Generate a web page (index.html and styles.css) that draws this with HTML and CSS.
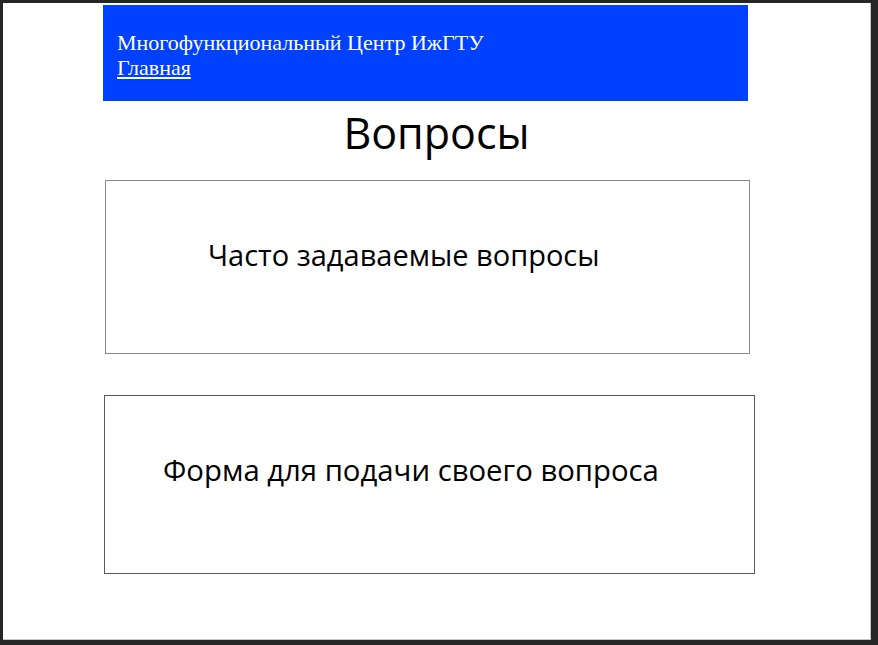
FILE: index.html
```html
<!DOCTYPE html>
<html lang="ru">
<head>
<meta charset="utf-8">
<title>Вопросы</title>
<link rel="stylesheet" href="styles.css">
</head>
<body>
<div class="canvas">
  <header class="header">
    <div class="brand">Многофункциональный Центр ИжГТУ</div>
    <a class="home" href="#">Главная</a>
  </header>
  <h1 class="title">Вопросы</h1>
  <div class="box box-faq">Часто задаваемые вопросы</div>
  <div class="box box-form">Форма для подачи своего вопроса</div>
</div>
</body>
</html>
```
FILE: styles.css
```css
html, body {
  margin: 0;
  padding: 0;
  background: #262626;
}
body {
  width: 878px;
  height: 645px;
  overflow: hidden;
}
.canvas {
  margin: 3px 0 0 3px;
  width: 867px;
  height: 634px;
  background: #ffffff;
  border-right: 1px solid #c4c4c4;
  border-bottom: 1px solid #c4c4c4;
  padding-top: 2px;
  box-sizing: content-box;
}
.canvas > * { box-sizing: border-box; }
.header {
  margin-left: 100px;
  width: 645px;
  height: 96px;
  background: #0040ff;
  padding: 25px 0 0 14px;
  font-family: "Liberation Serif", "Times New Roman", serif;
  font-size: 22px;
  line-height: 25px;
  color: #ffffff;
}
.brand { display: block; }
.home {
  color: #ffffff;
  text-decoration: underline;
}
.title {
  margin: 10px 0 0 0;
  font-family: "Open Sans", "Noto Sans", sans-serif;
  font-weight: 400;
  font-size: 43px;
  line-height: 43px;
  text-align: center;
  color: #000000;
}
.box {
  font-family: "Open Sans", "Noto Sans", sans-serif;
  font-size: 29px;
  line-height: 29px;
  color: #000000;
}
.box-faq {
  margin: 26px 0 0 102px;
  width: 645px;
  height: 174px;
  border: 1px solid #8a8a8a;
  padding: 59px 0 0 102px;
}
.box-form {
  margin: 41px 0 0 101px;
  width: 651px;
  height: 179px;
  border: 1px solid #5a5a5a;
  padding: 60px 0 0 58px;
  font-size: 29.3px;
}
```
